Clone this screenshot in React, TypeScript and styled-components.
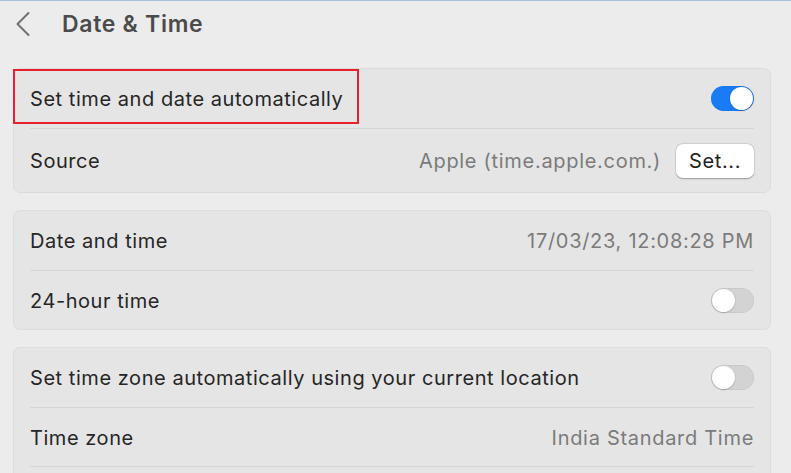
import React from 'react';
import styled, { createGlobalStyle } from 'styled-components';

const GlobalStyle = createGlobalStyle`
  html, body {
    margin: 0;
    padding: 0;
    background: #ececec;
  }
  body {
    font-family: Inter, "Liberation Sans", Arial, sans-serif;
    -webkit-font-smoothing: antialiased;
  }
`;

type Row = {
  label: string;
  value?: string;
  toggle?: boolean;
  button?: string;
  highlight?: boolean;
};

const sections: Row[][] = [
  [
    { label: 'Set time and date automatically', toggle: true, highlight: true },
    { label: 'Source', value: 'Apple (time.apple.com.)', button: 'Set...' },
  ],
  [
    { label: 'Date and time', value: '17/03/23, 12:08:28 PM' },
    { label: '24-hour time', toggle: false },
  ],
  [
    { label: 'Set time zone automatically using your current location', toggle: false },
    { label: 'Time zone', value: 'India Standard Time' },
    { label: 'Closest city', value: 'Mumbai - India' },
  ],
];

function App() {
  return (
    <>
      <GlobalStyle />
      <Window>
        <Header>
          <BackButton>
            <svg width="16" height="26" viewBox="0 0 16 26">
              <path d="M13.5 2 L2.5 13 L13.5 24" fill="none" stroke="#707070" strokeWidth="2" strokeLinecap="round" strokeLinejoin="round" />
            </svg>
          </BackButton>
          <Title>Date &amp; Time</Title>
        </Header>
        <Content>
          {sections.map((rows, i) => (
            <Card key={i}>
              {rows.map((row, j) => (
                <RowItem key={j} $first={j === 0} $tall={!!row.button}>
                  <Label>{row.label}</Label>
                  <Right>
                    {row.value && <Value>{row.value}</Value>}
                    {row.button && <PushButton>{row.button}</PushButton>}
                    {row.toggle !== undefined && (
                      <Toggle $on={row.toggle}>
                        <Knob $on={row.toggle} />
                      </Toggle>
                    )}
                  </Right>
                  {row.highlight && <Highlight />}
                </RowItem>
              ))}
            </Card>
          ))}
        </Content>
      </Window>
    </>
  );
}

const Window = styled.div`
  width: 791px;
  height: 473px;
  overflow: hidden;
  background: #ececec;
  border-top: 1px solid #a9c1dd;
  box-sizing: border-box;
`;

const Header = styled.div`
  display: flex;
  align-items: center;
  height: 46px;
  padding-left: 15px;
`;

const BackButton = styled.div`
  display: flex;
  align-items: center;
  width: 47px;
  margin-top: -1px;
`;

const Title = styled.h1`
  margin: 0;
  font-size: 23px;
  font-weight: 600;
  color: #4b4b4b;
  letter-spacing: 0.7px;
`;

const Content = styled.div`
  display: flex;
  flex-direction: column;
  gap: 17px;
  padding: 21px 20px 0 13px;
`;

const Card = styled.div`
  background: #e5e5e5;
  border: 1px solid #dcdcdc;
  border-radius: 7px;
  padding: 0 16px;
`;

const RowItem = styled.div<{ $first: boolean; $tall: boolean }>`
  position: relative;
  display: flex;
  align-items: center;
  justify-content: space-between;
  box-sizing: border-box;
  height: ${({ $tall }) => ($tall ? '64px' : '59px')};
  padding-top: ${({ $first }) => ($first ? '0' : '1px')};
  border-top: ${({ $first }) => ($first ? 'none' : '1px solid #d6d6d6')};
`;

const Label = styled.span`
  font-size: 20px;
  letter-spacing: 0.55px;
  color: #262626;
`;

const Right = styled.div`
  display: flex;
  align-items: center;
  gap: 15px;
`;

const Value = styled.span`
  font-size: 20px;
  letter-spacing: 0.7px;
  color: #7b7b7b;
`;

const PushButton = styled.button`
  height: 34px;
  padding: 0 13px;
  border: none;
  border-radius: 7px;
  background: #ffffff;
  box-shadow: 0 0.5px 1.5px rgba(0, 0, 0, 0.3), 0 0 0 0.5px rgba(0, 0, 0, 0.08);
  font-family: inherit;
  font-size: 20px;
  letter-spacing: 0.6px;
  color: #222222;
`;

const Toggle = styled.div<{ $on: boolean }>`
  position: relative;
  width: 43px;
  height: 25px;
  border-radius: 13px;
  background: ${({ $on }) => ($on ? '#1a7cf5' : '#d3d3d3')};
  box-shadow: inset 0 0 0 0.5px rgba(0, 0, 0, 0.08);
`;

const Knob = styled.div<{ $on: boolean }>`
  position: absolute;
  top: 1px;
  left: ${({ $on }) => ($on ? '19px' : '1px')};
  width: 23px;
  height: 23px;
  border-radius: 50%;
  background: #ffffff;
  box-shadow: 0 0.5px 1.5px rgba(0, 0, 0, 0.3);
`;

const Highlight = styled.div`
  position: absolute;
  left: -17px;
  top: 0;
  width: 346px;
  height: 55px;
  border: 2px solid #e8202a;
  box-sizing: border-box;
  pointer-events: none;
`;

export default App;
